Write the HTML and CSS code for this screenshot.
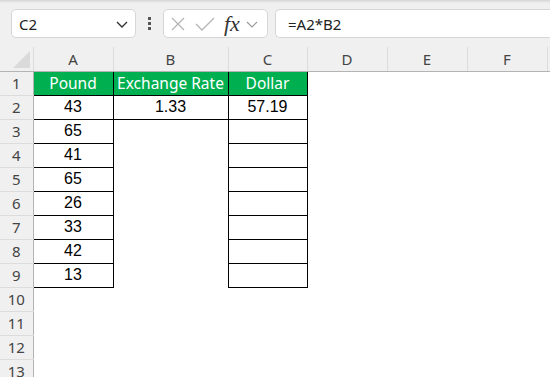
FILE: index.html
```html
<!DOCTYPE html>
<html lang="en">
<head>
    <meta charset="UTF-8">
    <title>Sheet</title>
    <link rel="stylesheet" href="styles.css">
</head>
<body>
    <div id="formula-bar">
        <div class="name-box">
            <span>C2</span>
            <svg width="14" height="14" viewBox="0 0 14 14"><path d="M2 5 L7 10 L12 5" fill="none" stroke="#333" stroke-width="1.4"/></svg>
        </div>
        <div class="dots"><i></i><i></i><i></i></div>
        <div class="fx-box">
            <svg width="16" height="16" viewBox="0 0 16 16"><path d="M2 2 L14 14 M14 2 L2 14" stroke="#b5b5b5" stroke-width="1.3"/></svg>
            <svg width="20" height="16" viewBox="0 0 20 16"><path d="M1 8 L7 14 L19 2" fill="none" stroke="#b5b5b5" stroke-width="1.3"/></svg>
            <span class="fx">fx</span>
            <svg width="12" height="12" viewBox="0 0 12 12"><path d="M1 4 L6 9 L11 4" fill="none" stroke="#9a9a9a" stroke-width="1.2"/></svg>
        </div>
        <div class="formula">=A2*B2</div>
    </div>

    <table id="sheet">
        <colgroup>
            <col style="width:33px">
            <col style="width:80px">
            <col style="width:115px">
            <col style="width:79px">
            <col style="width:80px">
            <col style="width:80px">
            <col style="width:80px">
            <col>
        </colgroup>
        <tr class="col-heads">
            <th class="corner"><span class="tri"></span></th>
            <th>A</th><th>B</th><th>C</th><th>D</th><th>E</th><th>F</th><th></th>
        </tr>
        <tr>
            <th class="row-head">1</th>
            <td class="b green">Pound</td><td class="b green">Exchange Rate</td><td class="b green">Dollar</td>
            <td></td><td></td><td></td><td></td>
        </tr>
        <tr>
            <th class="row-head">2</th>
            <td class="b num">43</td><td class="b num">1.33</td><td class="b num">57.19</td>
            <td></td><td></td><td></td><td></td>
        </tr>
        <tr><th class="row-head">3</th><td class="b num">65</td><td></td><td class="b"></td><td></td><td></td><td></td><td></td></tr>
        <tr><th class="row-head">4</th><td class="b num">41</td><td></td><td class="b"></td><td></td><td></td><td></td><td></td></tr>
        <tr><th class="row-head">5</th><td class="b num">65</td><td></td><td class="b"></td><td></td><td></td><td></td><td></td></tr>
        <tr><th class="row-head">6</th><td class="b num">26</td><td></td><td class="b"></td><td></td><td></td><td></td><td></td></tr>
        <tr><th class="row-head">7</th><td class="b num">33</td><td></td><td class="b"></td><td></td><td></td><td></td><td></td></tr>
        <tr><th class="row-head">8</th><td class="b num">42</td><td></td><td class="b"></td><td></td><td></td><td></td><td></td></tr>
        <tr><th class="row-head">9</th><td class="b num">13</td><td></td><td class="b"></td><td></td><td></td><td></td><td></td></tr>
        <tr><th class="row-head">10</th><td></td><td></td><td></td><td></td><td></td><td></td><td></td></tr>
        <tr><th class="row-head">11</th><td></td><td></td><td></td><td></td><td></td><td></td><td></td></tr>
        <tr><th class="row-head">12</th><td></td><td></td><td></td><td></td><td></td><td></td><td></td></tr>
        <tr><th class="row-head">13</th><td></td><td></td><td></td><td></td><td></td><td></td><td></td></tr>
    </table>
</body>
</html>
```

FILE: styles.css
```css
body {
    margin: 0;
    background: #fff;
    font-family: "Noto Sans", sans-serif;
    overflow: hidden;
}

#formula-bar {
    height: 47px;
    background: #f0f0f0;
    box-shadow: inset 0 3px 3px -2px rgba(0, 0, 0, 0.15);
    display: flex;
    align-items: flex-start;
    padding: 9px 0 0 11px;
    box-sizing: border-box;
}

.name-box, .fx-box, .formula {
    height: 29px;
    box-sizing: border-box;
    background: #fff;
    border: 1px solid #d6d6d6;
    border-radius: 5px;
    display: flex;
    align-items: center;
}

.name-box {
    width: 125px;
    padding: 0 6px 0 7px;
    justify-content: space-between;
    font-size: 15px;
    color: #222;
}

.dots {
    width: 27px;
    display: flex;
    flex-direction: column;
    align-items: center;
    gap: 2px;
    padding-top: 8px;
}

.dots i {
    width: 3px;
    height: 3px;
    background: #555;
}

.fx-box {
    width: 105px;
    padding: 0 0 0 6px;
    gap: 9px;
}

.fx-box .fx {
    font-family: "Liberation Serif", serif;
    font-style: italic;
    font-size: 22px;
    line-height: 1;
    color: #333;
    margin-right: -3px;
}

.formula {
    flex: 1;
    margin-left: 7px;
    border-right: none;
    border-radius: 5px 0 0 5px;
    padding-left: 12px;
    font-size: 15px;
    color: #222;
}

#sheet {
    border-collapse: collapse;
    table-layout: fixed;
    width: 560px;
}

#sheet th, #sheet td {
    height: 24px;
    padding: 0;
    box-sizing: border-box;
    text-align: center;
    white-space: nowrap;
    overflow: hidden;
}

.col-heads th {
    height: 23px;
    background: #f0f0f0;
    font-weight: normal;
    font-size: 15px;
    color: #444;
    border-left: 1px solid #dcdcdc;
    border-bottom: 1px solid #b4b4b4;
}

.col-heads th.corner {
    border-left: none;
    border-right: 1px solid #dcdcdc;
    position: relative;
}

.tri {
    position: absolute;
    right: 3px;
    bottom: 3px;
    width: 0;
    height: 0;
    border-left: 17px solid transparent;
    border-bottom: 17px solid #dadada;
}

.row-head {
    background: #f0f0f0;
    font-weight: normal;
    font-size: 15px;
    color: #444;
    border-right: 1px solid #b4b4b4;
    border-bottom: 1px solid #dcdcdc;
}

td.b {
    border: 1px solid #000;
}

td.green {
    background: #00b050;
    color: #fff;
    font-size: 15.5px;
}

td.num {
    font-family: "Liberation Sans", Arial, sans-serif;
    font-size: 16px;
    color: #000;
}
```
